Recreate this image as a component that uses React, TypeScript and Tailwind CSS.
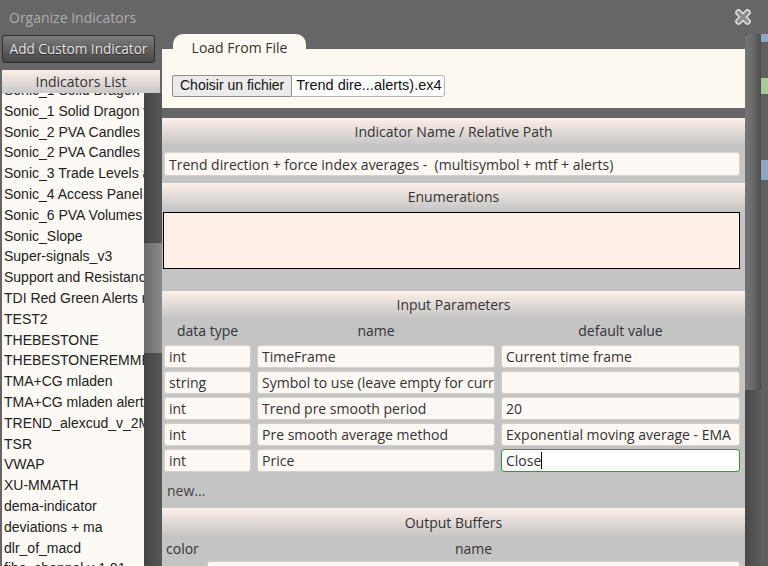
const INDICATORS = [
  "Sonic_1 Solid Dragon",
  "Sonic_1 Solid Dragon v2",
  "Sonic_2 PVA Candles",
  "Sonic_2 PVA Candles v2",
  "Sonic_3 Trade Levels alerts",
  "Sonic_4 Access Panel",
  "Sonic_6 PVA Volumes",
  "Sonic_Slope",
  "Super-signals_v3",
  "Support and Resistance",
  "TDI Red Green Alerts mtf",
  "TEST2",
  "THEBESTONE",
  "THEBESTONEREMMES",
  "TMA+CG mladen",
  "TMA+CG mladen alerts",
  "TREND_alexcud_v_2MTF",
  "TSR",
  "VWAP",
  "XU-MMATH",
  "dema-indicator",
  "deviations + ma",
  "dlr_of_macd",
  "fibo_channel v 1.01",
];

const PARAMS = [
  { type: "int", name: "TimeFrame", value: "Current time frame" },
  { type: "string", name: "Symbol to use (leave empty for current)", value: "" },
  { type: "int", name: "Trend pre smooth period", value: "20" },
  { type: "int", name: "Pre smooth average method", value: "Exponential moving average - EMA" },
  { type: "int", name: "Price", value: "Close", focused: true },
];

const UI_FONT = "[font-family:'Open_Sans',sans-serif]";
const SECTION_HEAD =
  "h-[27px] shrink-0 flex items-center justify-center bg-linear-to-b from-[#fdf0e9] to-[#c6c6c6] text-[14px] text-[#333]";
const FIELD =
  "h-[23px] flex items-center px-[4px] rounded-[3px] border border-[#d6d0ca] bg-[#fdf8f4] text-[14px] text-[#333] whitespace-nowrap overflow-hidden";

function CloseIcon() {
  return (
    <svg width="18" height="18" viewBox="0 0 18 18">
      <path d="M4.5 4.5L13.5 13.5M13.5 4.5L4.5 13.5" stroke="#e4e4e4" strokeWidth="6.5" strokeLinecap="round" />
      <path d="M4.5 4.5L13.5 13.5M13.5 4.5L4.5 13.5" stroke="#8c8c8c" strokeWidth="3.5" strokeLinecap="round" />
    </svg>
  );
}

export default function App() {
  return (
    <div className={`w-[768px] h-[566px] overflow-hidden bg-[#666] flex flex-col ${UI_FONT}`}>
      {/* Title bar */}
      <div className="h-[34px] shrink-0 flex items-center justify-between pl-[9px] pr-[16px]">
        <span className="text-[14px] text-[#adadad]">Organize Indicators</span>
        <CloseIcon />
      </div>

      <div className="flex flex-1 min-h-0">
        {/* Left column */}
        <div className="w-[160px] ml-[2px] flex flex-col">
          <button className="mt-[1px] h-[28px] w-[153px] shrink-0 rounded-[3px] border border-[#2c2c2c] bg-linear-to-b from-[#7c7c7c] to-[#474747] text-[13.6px] text-[#e6e6e6] [text-shadow:0_1px_1px_#222]">
            Add Custom Indicator
          </button>
          <div className="mt-[7px] h-[23px] w-[158px] shrink-0 flex items-center justify-center bg-linear-to-b from-[#fcefe8] to-[#c8c8c8] text-[14px] text-[#333]">
            Indicators List
          </div>
          <div className="flex flex-1 min-h-0">
            <div className="w-[142px] bg-[#fdf9f5] overflow-hidden">
              <div className="mt-[-13px] pl-[2px] [font-family:'Liberation_Sans',Arial,sans-serif] text-[14px] leading-[20.8px] text-[#222] whitespace-nowrap">
                {INDICATORS.map((item, i) => (
                  <div key={i}>{item}</div>
                ))}
              </div>
            </div>
            <div className="w-[18px] flex flex-col bg-linear-to-r from-[#444] to-[#575757]">
              <div className="h-[150px]" />
              <div className="h-[110px] bg-linear-to-r from-[#6a6a6a] to-[#8a8a8a]" />
            </div>
          </div>
        </div>

        {/* Right column */}
        <div className="w-[583px] flex flex-col">
          <div className="h-[15px] shrink-0 pl-[11px]">
            <div className="relative z-10 w-[133px] h-[15px] rounded-t-[10px] bg-[#fdf9f0] flex justify-center">
              <span className="pt-[4px] text-[14px] leading-[19px] text-[#333]">Load From File</span>
            </div>
          </div>
          <div className="h-[59px] shrink-0 bg-[#fdf9f0] pt-[26px] pl-[10px] flex items-start">
            <div className="flex h-[22px] items-center rounded-[3px] border border-[#b3b3b3] bg-white pr-[2px] [font-family:'Liberation_Sans',Arial,sans-serif] text-[14.5px] text-[#111]">
              <span className="h-[22px] flex items-center px-[7px] mt-[-1px] ml-[-1px] rounded-[2px] border border-[#8e8e8e] bg-[#ebebeb] text-[14px]">
                Choisir un fichier
              </span>
              <span className="pl-[4px]">Trend dire...alerts).ex4</span>
            </div>
          </div>
          <div className="h-[10px] shrink-0" />

          <div className="flex-1 min-h-0 bg-[#c4c4c4] flex flex-col">
            <div className={SECTION_HEAD}>Indicator Name / Relative Path</div>
            <div className="pt-[7px] pb-[7px] pl-[2px] pr-[5px]">
              <div className={`${FIELD} h-[24px]`}>
                Trend direction + force index averages -&nbsp; (multisymbol + mtf + alerts)
              </div>
            </div>
            <div className={SECTION_HEAD}>Enumerations</div>
            <div className="pt-[2px] pl-[1px] pr-[5px]">
              <div className="h-[57px] border border-black bg-[#fdeee6]" />
            </div>
            <div className="h-[22px] shrink-0" />
            <div className={SECTION_HEAD}>Input Parameters</div>
            <div className="pl-[2px] pr-[4px]">
              <div className="grid grid-cols-[87px_238px_239px] gap-x-[6px] gap-y-[3px] text-[14px] text-[#333]">
                <div className="h-[24px] flex items-center justify-center">data type</div>
                <div className="h-[24px] flex items-center justify-center">name</div>
                <div className="h-[24px] flex items-center justify-center">default value</div>
                {PARAMS.map((p, i) => (
                  <div key={i} className="contents">
                    <div className={FIELD}>{p.type}</div>
                    <div className={FIELD}>{p.name}</div>
                    {p.focused ? (
                      <div className="h-[23px] flex items-center px-[4px] rounded-[3px] border border-[#2f9a2f] bg-white text-[14px] text-[#333]">
                        {p.value}
                        <span className="w-px h-[17px] bg-black" />
                      </div>
                    ) : (
                      <div className={FIELD}>{p.value}</div>
                    )}
                  </div>
                ))}
              </div>
              <div className="h-[36px] flex items-center pl-[3px] text-[14px] text-[#444]">new...</div>
            </div>
            <div className={`${SECTION_HEAD} h-[28px]`}>Output Buffers</div>
            <div className="h-[25px] shrink-0 flex items-center pl-[4px] pr-[5px] text-[14px] text-[#333]">
              <span className="w-[41px]">color</span>
              <span className="flex-1 text-center">name</span>
            </div>
            <div className="pl-[45px] pr-[5px]">
              <div className={FIELD} />
            </div>
          </div>
        </div>

        {/* Right scrollbar */}
        <div className="w-[16px] flex flex-col bg-linear-to-r from-[#474747] to-[#5c5c5c]">
          <div className="h-[356px] rounded-t-[4px] bg-linear-to-r from-[#747474] via-[#6a6a6a] to-[#4c4c4c]" />
        </div>

        {/* Page behind */}
        <div className="flex-1 flex flex-col bg-[#5f5f5f]">
          <div className="h-[8px] bg-[#8fa6c0]" />
          <div className="h-[36px]" />
          <div className="h-[16px] bg-[#a7c89a]" />
          <div className="h-[66px]" />
          <div className="h-[20px] bg-[#8fa6c0]" />
        </div>
      </div>
    </div>
  );
}
